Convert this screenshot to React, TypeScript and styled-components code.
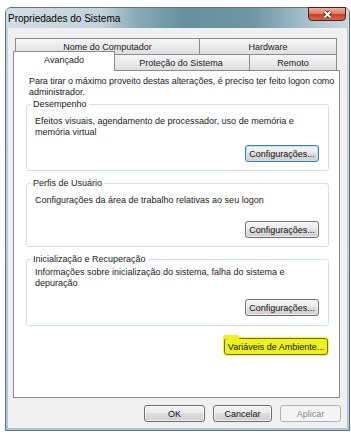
import React from "react";
import styled, { createGlobalStyle, css } from "styled-components";

const GlobalStyle = createGlobalStyle`
  html, body {
    margin: 0;
    padding: 0;
    background: #ffffff;
  }
  body {
    font-family: "Liberation Sans", Arial, sans-serif;
    font-size: 9px;
    color: #1a1a1a;
  }
  * {
    box-sizing: border-box;
  }
`;

const Window = styled.div`
  display: flex;
  flex-direction: column;
  width: 345px;
  height: 424px;
  margin: 7px 0 0 5px;
  border: 1px solid #5f7282;
  border-radius: 6px 6px 0 0;
  background: linear-gradient(180deg, #c3d5e3 0%, #aec6d8 100%);
`;

const TitleBar = styled.div`
  display: flex;
  align-items: center;
  justify-content: space-between;
  height: 20px;
  padding: 0 3px 0 2px;
  border-radius: 5px 5px 0 0;
  background: linear-gradient(
    90deg,
    #d2dde4 0%,
    #c3d2db 28%,
    #8aabb7 38%,
    #65909d 52%,
    #6f97a3 72%,
    #b0c6d0 90%,
    #c9d7df 100%
  );
`;

const Title = styled.span`
  font-size: 10px;
  color: #000;
`;

const CloseButton = styled.button`
  display: flex;
  align-items: center;
  justify-content: center;
  align-self: flex-start;
  width: 38px;
  height: 14px;
  margin-top: -1px;
  padding: 0;
  border: 1px solid #5a1d12;
  border-radius: 0 0 4px 4px;
  background: linear-gradient(
    180deg,
    #eab1a2 0%,
    #dd8069 45%,
    #c6432a 55%,
    #d3664b 100%
  );
`;

const Client = styled.div`
  flex: 1;
  display: flex;
  flex-direction: column;
  margin: 0 2px 2px 2px;
  background: #f0f0f0;
`;

const TabStrip = styled.div`
  display: flex;
  flex-direction: column;
  padding: 10px 0 0 7px;
`;

const TabRow = styled.div`
  display: flex;
  align-items: flex-end;
  height: 16px;
`;

const Tab = styled.div<{ $w: number; $active?: boolean }>`
  display: flex;
  align-items: center;
  justify-content: center;
  width: ${p => p.$w}px;
  height: 16px;
  border: 1px solid #898c95;
  border-bottom: none;
  background: linear-gradient(180deg, #f5f5f5 0%, #ebebeb 50%, #dedede 100%);
  white-space: nowrap;
  color: #1a1a1a;

  & + & {
    border-left: none;
  }

  ${p => p.$active && css`
    position: relative;
    z-index: 1;
    width: ${p.$w + 4}px;
    height: 20px;
    margin: -3px -2px -1px -2px;
    padding-bottom: 4px;
    background: #ffffff;
  `}
`;

const Panel = styled.div`
  display: flex;
  flex-direction: column;
  width: 327px;
  height: 328px;
  margin-left: 5px;
  padding: 5px 10px 0 12px;
  border: 1px solid #898c95;
  background: #ffffff;
`;

const Intro = styled.p`
  margin: 0;
  padding-left: 3px;
  line-height: 11px;
  letter-spacing: -0.05px;
  white-space: nowrap;
`;

const Group = styled.fieldset<{ $pt: number; $pb?: number }>`
  min-inline-size: auto;
  margin: 7px 0 0 0;
  padding: ${p => p.$pt}px 9px ${p => p.$pb ?? 8}px 8px;
  border: 1px solid #d5dfe5;
  border-radius: 3px;

  ${Intro} + & {
    margin-top: 1px;
  }
`;

const Legend = styled.legend`
  margin-left: -4px;
  padding: 0 2px;
  line-height: 11px;
  color: #1a1a1a;
`;

const GroupText = styled.p`
  margin: 0;
  line-height: 11px;
  white-space: nowrap;
`;

const ButtonRow = styled.div<{ $mt: number }>`
  display: flex;
  justify-content: flex-end;
  margin-top: ${p => p.$mt}px;
`;

const Button = styled.button<{ $w: number; $default?: boolean }>`
  width: ${p => p.$w}px;
  height: 17px;
  padding: 0;
  border: 1px solid #707070;
  border-radius: 3px;
  background: linear-gradient(
    180deg,
    #f3f3f3 0%,
    #ebebeb 49%,
    #dddddd 50%,
    #d0d0d0 100%
  );
  box-shadow: inset 0 0 0 1px rgba(255, 255, 255, 0.6);
  font-family: inherit;
  font-size: 9px;
  color: #111;
  white-space: nowrap;

  &:disabled {
    border-color: #adb2b5;
    background: #f4f4f4;
    box-shadow: none;
    color: #8a8a8a;
  }

  ${p => p.$default && css`
    border-color: #3c7fb1;
    box-shadow: inset 0 0 0 1px #bfe4f7;
  `}
`;

const HighlightButton = styled(Button)`
  position: relative;
  border-color: #6e6e3c;
  background: #eef21c;
  box-shadow: 0 0 0 1px #f2f53a;

  &::before {
    content: "";
    position: absolute;
    left: -2px;
    top: -4px;
    width: 16px;
    height: 4px;
    border-radius: 2px 2px 0 0;
    background: #eef21c;
  }
`;

const EnvRow = styled.div`
  display: flex;
  justify-content: flex-end;
  margin-top: 12px;
  padding-right: 1px;
`;

const Footer = styled.div`
  display: flex;
  justify-content: flex-end;
  gap: 8px;
  padding: 7px 6px 0 0;
`;

const CloseGlyph = () => (
  <svg width="11" height="9" viewBox="0 0 11 9">
    <path d="M2.5 1.5 L8.5 7.5 M8.5 1.5 L2.5 7.5" stroke="#3e1a12" strokeWidth="3.6" />
    <path d="M2.5 1.5 L8.5 7.5 M8.5 1.5 L2.5 7.5" stroke="#ffffff" strokeWidth="2" />
  </svg>
);

export default function App() {
  return (
    <>
      <GlobalStyle />
      <Window>
        <TitleBar>
          <Title>Propriedades do Sistema</Title>
          <CloseButton aria-label="Fechar">
            <CloseGlyph />
          </CloseButton>
        </TitleBar>

        <Client>
          <TabStrip>
            <TabRow>
              <Tab $w={185}>Nome do Computador</Tab>
              <Tab $w={137}>Hardware</Tab>
            </TabRow>
            <TabRow>
              <Tab $w={98} $active>Avançado</Tab>
              <Tab $w={137}>Proteção do Sistema</Tab>
              <Tab $w={87}>Remoto</Tab>
            </TabRow>
          </TabStrip>

          <Panel>
            <Intro>
              Para tirar o máximo proveito destas alterações, é preciso ter feito logon como
              <br />
              administrador.
            </Intro>

            <Group $pt={6}>
              <Legend>Desempenho</Legend>
              <GroupText>
                Efeitos visuais, agendamento de processador, uso de memória e
                <br />
                memória virtual
              </GroupText>
              <ButtonRow $mt={7}>
                <Button $w={74} $default>Configurações...</Button>
              </ButtonRow>
            </Group>

            <Group $pt={6}>
              <Legend>Perfis de Usuário</Legend>
              <GroupText>Configurações da área de trabalho relativas ao seu logon</GroupText>
              <ButtonRow $mt={15}>
                <Button $w={74}>Configurações...</Button>
              </ButtonRow>
            </Group>

            <Group $pt={2} $pb={9}>
              <Legend>Inicialização e Recuperação</Legend>
              <GroupText>
                Informações sobre inicialização do sistema, falha do sistema e
                <br />
                depuração
              </GroupText>
              <ButtonRow $mt={10}>
                <Button $w={74}>Configurações...</Button>
              </ButtonRow>
            </Group>

            <EnvRow>
              <HighlightButton $w={104}>Variáveis de Ambiente...</HighlightButton>
            </EnvRow>
          </Panel>

          <Footer>
            <Button $w={61}>OK</Button>
            <Button $w={59}>Cancelar</Button>
            <Button $w={61} disabled>Aplicar</Button>
          </Footer>
        </Client>
      </Window>
    </>
  );
}
